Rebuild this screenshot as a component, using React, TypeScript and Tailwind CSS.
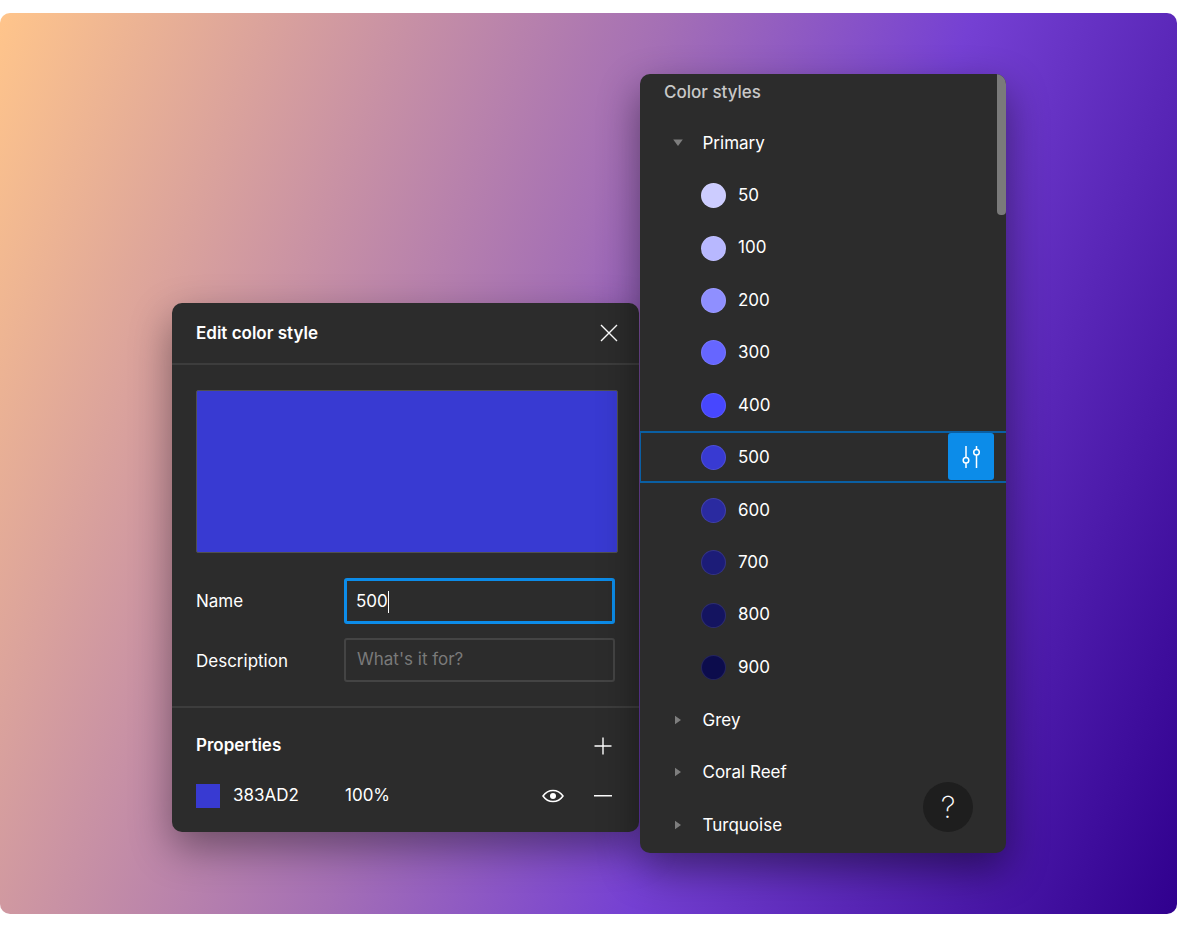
const swatches = [
  { label: "50", color: "#ccccff" },
  { label: "100", color: "#b8b8ff" },
  { label: "200", color: "#8f8fff" },
  { label: "300", color: "#6666ff" },
  { label: "400", color: "#4747ff" },
  { label: "500", color: "#383ad2", selected: true },
  { label: "600", color: "#2a2aa0" },
  { label: "700", color: "#1c1c78" },
  { label: "800", color: "#141460" },
  { label: "900", color: "#0c0c4c" },
];

function Caret({ open }: { open?: boolean }) {
  return (
    <svg width="12" height="12" viewBox="0 0 12 12" className="shrink-0 fill-[#7e7e7e]">
      {open ? <path d="M1.2 2.500h9.600L6 9z" /> : <path d="M3 1.700v8.600L9 6z" />}
    </svg>
  );
}

function Group({ label, open }: { label: string; open?: boolean }) {
  return (
    <div className="flex h-[52.45px] items-center pl-[32px]">
      <Caret open={open} />
      <span className="ml-[18.500px] pt-[1px] text-[17px] text-white">{label}</span>
    </div>
  );
}

function Row({ label, color, selected }: { label: string; color: string; selected?: boolean }) {
  return (
    <div
      className={
        selected
          ? "-mt-[1px] mb-[1px] flex h-[52.45px] items-center justify-between border-y-2 border-l border-[#0a5fa3] pl-[60px] pr-[12px]"
          : "flex h-[52.45px] items-center pl-[61px]"
      }
    >
      <div className={selected ? "flex items-center pt-[1px]" : "flex items-center"}>
        <span
          className="h-[25px] w-[25px] rounded-full border border-white/10"
          style={{ backgroundColor: color }}
        />
        <span className="ml-[12px] text-[17px] text-white">{label}</span>
      </div>
      {selected && (
        <div className="flex h-[47px] w-[46px] items-center justify-center rounded-[3px] bg-[#0c8ce9]">
          <svg width="24" height="26" viewBox="0 0 24 26" fill="none" stroke="white" strokeWidth="1.5">
            <path d="M7 2v11.5M7 19v5M17.5 2v3.5M17.5 11v13" />
            <circle cx="7" cy="16.200" r="2.800" />
            <circle cx="17.500" cy="8.200" r="2.800" />
          </svg>
        </div>
      )}
    </div>
  );
}

export default function App() {
  return (
    <div className="min-h-[947px] bg-white pt-[13px] font-['Inter',sans-serif]">
      <div className="flex h-[901px] gap-px overflow-hidden rounded-[10px] bg-[linear-gradient(111deg,#ffc58b_0%,#a46fb5_44%,#7540d3_64%,#30008e_100%)] pl-[172px]">
        <section className="mt-[290px] flex h-[529px] w-[467px] shrink-0 flex-col rounded-[10px] bg-[#2c2c2c] shadow-[0_16px_40px_rgba(0,0,0,0.4)]">
          <header className="flex h-[62px] shrink-0 items-center justify-between border-b-2 border-[#3d3d3d] pl-[24px] pr-[21px]">
            <h2 className="pt-[1px] text-[17px] font-semibold text-white">Edit color style</h2>
            <svg width="18" height="18" viewBox="0 0 18 18" fill="none" stroke="white" strokeWidth="1.4">
              <path d="M1 1l16 16M17 1L1 17" />
            </svg>
          </header>
          <div className="flex h-[343px] shrink-0 flex-col border-b-2 border-[#3d3d3d] pl-[24px] pr-[24px] pt-[25px]">
            <div className="h-[163px] w-[422px] rounded-[2px] border-[1.5px] border-[#505050] bg-[#383ad2]" />
            <div className="mt-[25px] flex h-[46px] items-center">
              <span className="w-[148px] pt-[2px] text-[17px] text-white">Name</span>
              <div className="flex h-[46px] w-[271px] items-center rounded-[3px] border-[3px] border-[#0c8ce9] pl-[9px] pt-[1px] text-[17px] text-white">
                500
                <span className="h-[22px] w-[1.5px] bg-white" />
              </div>
            </div>
            <div className="mt-[14px] flex h-[44px] items-center">
              <span className="w-[148px] pt-[3px] text-[17px] text-white">Description</span>
              <div className="flex h-[44px] w-[271px] items-center rounded-[3px] border-2 border-[#444444] pb-[1px] pl-[11px] text-[17px] text-[#7a7a7a]">
                What's it for?
              </div>
            </div>
          </div>
          <div className="flex h-[76px] shrink-0 items-center justify-between pl-[24px] pr-[27px]">
            <h3 className="text-[17px] font-semibold text-white">Properties</h3>
            <svg width="18" height="18" viewBox="0 0 18 18" fill="none" stroke="white" strokeWidth="1.4">
              <path d="M9 0.500v17M0.500 9h17" />
            </svg>
          </div>
          <div className="-mt-[1px] flex items-center pl-[24px] pr-[27px]">
            <span className="h-[24px] w-[24px] bg-[#383ad2]" />
            <span className="ml-[13px] w-[112px] text-[17px] text-white">383AD2</span>
            <span className="text-[17px] text-white">100%</span>
            <svg width="22" height="14" viewBox="0 0 22 14" fill="none" stroke="white" strokeWidth="1.5" className="ml-auto">
              <path d="M1 7c2.500-3.600 6-5.600 10-5.600S18.500 3.400 21 7c-2.500 3.600-6 5.600-10 5.600S3.500 10.600 1 7z" />
              <circle cx="11" cy="7" r="3" fill="white" stroke="none" />
            </svg>
            <svg width="18" height="2" viewBox="0 0 18 2" className="ml-[30px] fill-white">
              <rect width="18" height="1.500" />
            </svg>
          </div>
        </section>
        <section className="relative mt-[61px] h-[779px] w-[366px] shrink-0 overflow-hidden rounded-[10px] bg-[#2c2c2c] shadow-[0_16px_40px_rgba(0,0,0,0.45)]">
          <h2 className="pl-[24px] pt-[7px] text-[17px] font-medium leading-[22px] text-[#c8c8c8]">Color styles</h2>
          <div className="mt-[14px]">
            <Group label="Primary" open />
            {swatches.map((s) => (
              <Row key={s.label} label={s.label} color={s.color} selected={s.selected} />
            ))}
            <Group label="Grey" />
            <Group label="Coral Reef" />
            <Group label="Turquoise" />
          </div>
          <div className="absolute right-0 top-0 h-[141px] w-[9px] rounded-b-[4px] bg-[#7a7a7a]" />
          <div className="absolute left-[283px] top-[708px] flex h-[50px] w-[50px] items-center justify-center rounded-full bg-[#1e1e1e] text-[30px] font-extralight text-white">
            ?
          </div>
        </section>
      </div>
    </div>
  );
}
